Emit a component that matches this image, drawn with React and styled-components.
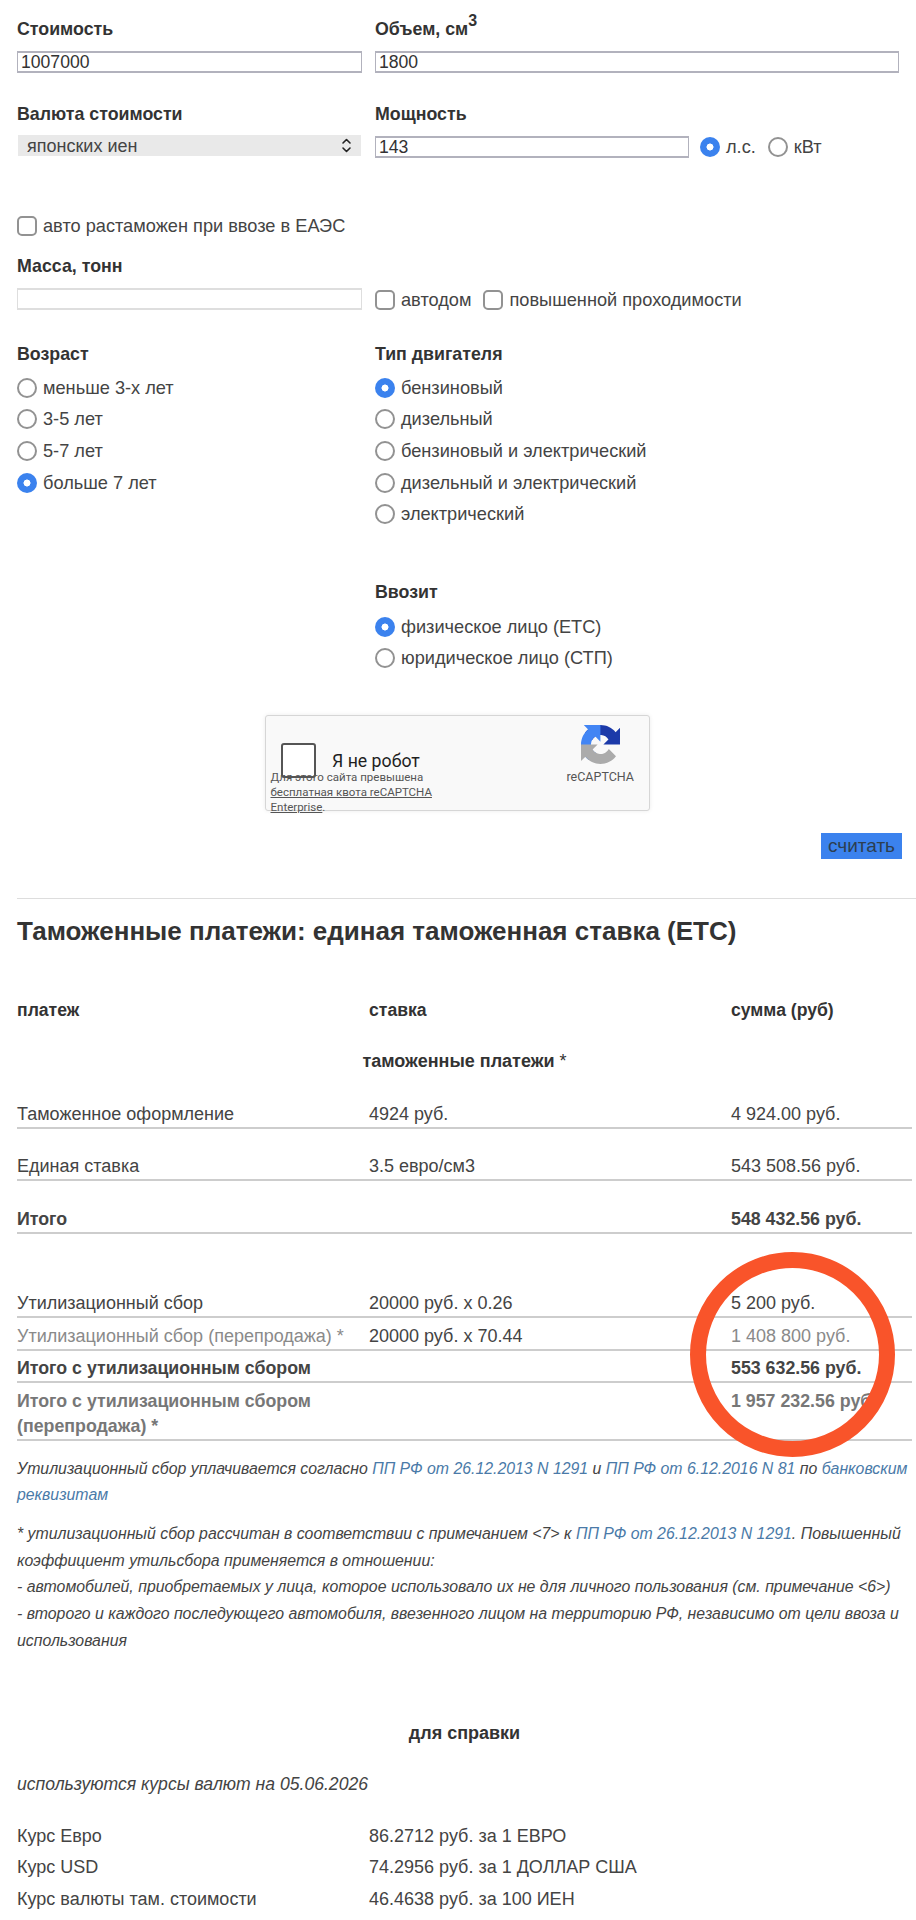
import React from 'react';
import styled, { createGlobalStyle } from 'styled-components';

const Global = createGlobalStyle`
  html, body { margin: 0; padding: 0; background: #fff; }
  body { font-family: "Liberation Sans", Arial, sans-serif; color: #444; font-size: 18px; }
`;

const Page = styled.div`
  position: relative;
  width: 916px;
  height: 1920px;
  overflow: hidden;
  box-sizing: border-box;
  padding: 19px 0 0 17px;
  line-height: 20px;
`;

const FormRow = styled.div`
  display: grid;
  grid-template-columns: 345px 524px;
  column-gap: 13px;
  margin-top: ${(p) => p.$top || 0}px;
`;

const Label = styled.div`
  font-size: 17.8px;
  font-weight: 700;
  color: #333;
  height: 20px;
  margin-bottom: ${(p) => (p.$gap === undefined ? 12 : p.$gap)}px;
`;

const Sup = styled.sup`
  font-size: 16px;
  line-height: 0;
  vertical-align: 9px;
`;

const TextInput = styled.input`
  display: block;
  box-sizing: border-box;
  width: ${(p) => p.$w || '100%'};
  height: 22px;
  padding: 0 3px;
  border-style: solid;
  border-color: ${(p) => (p.$light ? '#dedede' : '#b2b2bd')};
  border-width: 2px 1px;
  border-radius: 0;
  font: 17.6px "Liberation Sans", Arial, sans-serif;
  color: #333;
  background: #fff;
  outline: none;
`;

const SelectWrap = styled.div`
  position: relative;
  width: 343px;
  height: 21px;
  margin-left: 1px;
`;

const Select = styled.select`
  display: block;
  width: 100%;
  height: 100%;
  appearance: none;
  border: 0;
  border-radius: 0;
  background: #e9e9e9;
  padding: 0 0 0 9px;
  font: 18px "Liberation Sans", Arial, sans-serif;
  color: #444;
  outline: none;
`;

const SelectIcon = styled.svg`
  position: absolute;
  right: 9px;
  top: 3px;
  width: 11px;
  height: 15px;
  pointer-events: none;
`;

const InlineRow = styled.div`
  display: flex;
  align-items: center;
  gap: ${(p) => p.$gap || 0}px;
`;

const OptionLabel = styled.label`
  display: flex;
  align-items: center;
  gap: 6px;
  height: ${(p) => p.$h || 20}px;
  white-space: nowrap;
  font-size: 18.2px;
  color: #444;
`;

const Radio = styled.input.attrs({ type: 'radio' })`
  appearance: none;
  box-sizing: border-box;
  flex: none;
  width: 20px;
  height: 20px;
  margin: 0;
  border: 2px solid #929292;
  border-radius: 50%;
  background: #fff;
  &:checked {
    border: 0;
    background: radial-gradient(circle, #fff 0 3.2px, #3b82ee 3.8px);
  }
`;

const Check = styled.input.attrs({ type: 'checkbox' })`
  appearance: none;
  box-sizing: border-box;
  flex: none;
  width: 20px;
  height: 20px;
  margin: 0;
  border: 2px solid #929292;
  border-radius: 5px;
  background: #fff;
`;

const Options = styled.div`
  display: flex;
  flex-direction: column;
  margin-top: ${(p) => p.$top || 0}px;
`;

const Captcha = styled.div`
  position: relative;
  box-sizing: border-box;
  width: 385px;
  height: 96px;
  margin: 41px 0 0 248px;
  padding: 27px 0 0 15px;
  background: #f9f9f9;
  border: 1px solid #d6d6d6;
  border-radius: 3px;
  box-shadow: 0 0 4px rgba(0, 0, 0, 0.08);
  font-family: Roboto, "Liberation Sans", sans-serif;
`;

const CaptchaMain = styled.div`
  display: flex;
  align-items: center;
  gap: 16px;
  color: #1f1f1f;
  font-size: 17.7px;
`;

const CaptchaBox = styled.div`
  width: 35px;
  height: 35px;
  box-sizing: border-box;
  border: 2px solid #555;
  border-radius: 3px;
  background: #fff;
`;

const CaptchaNote = styled.div`
  position: absolute;
  left: 4.5px;
  top: 53.5px;
  width: 170px;
  font-size: 11.5px;
  line-height: 15px;
  color: #555;
  a { color: #555; text-decoration: underline; }
`;

const CaptchaBrand = styled.div`
  position: absolute;
  right: 15px;
  top: 9px;
  display: flex;
  flex-direction: column;
  align-items: center;
  gap: 6px;
  font-size: 12.5px;
  line-height: 14px;
  color: #555;
`;

const Submit = styled.button`
  display: block;
  box-sizing: border-box;
  width: 81px;
  height: 26px;
  margin: 22px 0 0 804px;
  padding: 0;
  border: 0;
  background: #3b82ee;
  font: 19px "Liberation Sans", Arial, sans-serif;
  color: #2c3e50;
`;

const Rule = styled.hr`
  margin: 39px 0 0 0;
  border: 0;
  border-top: 1px solid #ddd;
`;

const Title = styled.h2`
  margin: 19px 0 0;
  font-size: 26px;
  line-height: 26px;
  font-weight: 700;
  color: #333;
`;

const Table = styled.table`
  table-layout: fixed;
  width: 895px;
  margin-top: 54px;
  border-collapse: collapse;
  color: #444;
  line-height: 25px;
`;

const Col = styled.col`
  width: ${(p) => p.$w}px;
`;

const Cell = styled.td`
  padding: ${(p) => (p.$compact ? 5.5 : 25.5)}px 0 0;
  vertical-align: top;
  color: ${(p) => p.$color || 'inherit'};
  font-weight: ${(p) => (p.$bold ? 700 : 400)};
  font-size: ${(p) => (p.$bold ? 17.8 : 18)}px;
`;

const Row = styled.tr`
  border-bottom: ${(p) => (p.$plain ? '0' : '2px solid #cdcdcd')};
`;

const HeadCell = styled.th`
  padding: 0;
  text-align: left;
  font-size: 17.6px;
  font-weight: 700;
  color: #333;
`;

const SectionCell = styled.td`
  padding: 26px 0 2px;
  text-align: center;
  font-size: 18px;
  font-weight: 700;
  color: #333;
`;

const Asterisk = styled.span`
  font-weight: 400;
`;

const SpacerCell = styled.td`
  height: 52px;
  padding: 0;
`;

const Note = styled.p`
  margin: ${(p) => p.$top || 0}px 0 0;
  font-size: 15.85px;
  font-style: italic;
  line-height: 26.7px;
  color: #444;
  a { color: #4a7aa8; text-decoration: none; }
`;

const Center = styled.div`
  margin-top: ${(p) => p.$top}px;
  width: 895px;
  text-align: center;
  font-size: 18px;
  font-weight: 700;
  color: #333;
`;

const RatesNote = styled.p`
  margin: 30px 0 0;
  font-size: 17.6px;
  font-style: italic;
  color: #444;
  line-height: 22px;
`;

const Rates = styled.div`
  display: grid;
  grid-template-columns: 352px 1fr;
  grid-auto-rows: 31.5px;
  margin-top: 26px;
  line-height: 31.5px;
`;

const Ring = styled.div`
  position: absolute;
  left: 690px;
  top: 1252px;
  width: 205px;
  height: 205px;
  box-sizing: border-box;
  border: 16px solid #f9542a;
  border-radius: 50%;
  pointer-events: none;
`;

function Opt({ name, children, checked, h }) {
  return (
    <OptionLabel $h={h}>
      <Radio name={name} defaultChecked={checked} />
      {children}
    </OptionLabel>
  );
}

function Cb({ children }) {
  return (
    <OptionLabel>
      <Check />
      {children}
    </OptionLabel>
  );
}

export default function App() {
  return (
    <Page>
      <Global />
      <FormRow>
        <div>
          <Label>Стоимость</Label>
          <TextInput defaultValue="1007000" />
        </div>
        <div>
          <Label>Объем, см<Sup>3</Sup></Label>
          <TextInput defaultValue="1800" />
        </div>
      </FormRow>
      <FormRow $top={31}>
        <div>
          <Label $gap={11}>Валюта стоимости</Label>
          <SelectWrap>
            <Select defaultValue="jpy">
              <option value="jpy">японских иен</option>
            </Select>
            <SelectIcon viewBox="0 0 11 15" fill="none" stroke="#222" strokeWidth="1.6" strokeLinecap="round" strokeLinejoin="round">
              <path d="M2 5l3.5-3.5L9 5" />
              <path d="M2 10l3.5 3.5L9 10" />
            </SelectIcon>
          </SelectWrap>
        </div>
        <div>
          <Label>Мощность</Label>
          <InlineRow $gap={11}>
            <TextInput $w="314px" defaultValue="143" />
            <InlineRow $gap={12}>
              <Opt name="unit" checked>л.с.</Opt>
              <Opt name="unit">кВт</Opt>
            </InlineRow>
          </InlineRow>
        </div>
      </FormRow>
      <Options $top={58}>
        <Cb>авто растаможен при ввозе в ЕАЭС</Cb>
      </Options>
      <FormRow $top={20}>
        <div>
          <Label>Масса, тонн</Label>
          <TextInput $light />
        </div>
        <div>
          <Label $gap={14}>&nbsp;</Label>
          <InlineRow $gap={12}>
            <Cb>автодом</Cb>
            <Cb>повышенной проходимости</Cb>
          </InlineRow>
        </div>
      </FormRow>
      <FormRow $top={34}>
        <div>
          <Label $gap={8}>Возраст</Label>
          <Options>
            <Opt name="age" h={31.6}>меньше 3-х лет</Opt>
            <Opt name="age" h={31.6}>3-5 лет</Opt>
            <Opt name="age" h={31.6}>5-7 лет</Opt>
            <Opt name="age" h={31.6} checked>больше 7 лет</Opt>
          </Options>
        </div>
        <div>
          <Label $gap={8}>Тип двигателя</Label>
          <Options>
            <Opt name="fuel" h={31.6} checked>бензиновый</Opt>
            <Opt name="fuel" h={31.6}>дизельный</Opt>
            <Opt name="fuel" h={31.6}>бензиновый и электрический</Opt>
            <Opt name="fuel" h={31.6}>дизельный и электрический</Opt>
            <Opt name="fuel" h={31.6}>электрический</Opt>
          </Options>
        </div>
      </FormRow>
      <FormRow $top={52}>
        <div />
        <div>
          <Label $gap={9}>Ввозит</Label>
          <Options>
            <Opt name="who" h={31.6} checked>физическое лицо (ЕТС)</Opt>
            <Opt name="who" h={31.6}>юридическое лицо (СТП)</Opt>
          </Options>
        </div>
      </FormRow>
      <Captcha>
        <CaptchaMain>
          <CaptchaBox />
          Я не робот
        </CaptchaMain>
        <CaptchaNote>
          Для этого сайта превышена <a href="#q">бесплатная квота reCAPTCHA Enterprise</a>.
        </CaptchaNote>
        <CaptchaBrand>
          <svg width="39" height="39" viewBox="0 0 64 64">
            <path d="M64 31.955l-.033-1.37V4.687l-7.16 7.16C50.948 4.674 42.033.093 32.05.093c-10.4 0-19.622 4.96-25.458 12.64l11.736 11.86a15.55 15.55 0 0 1 4.754-5.334c2.05-1.6 4.952-2.906 8.968-2.906.485 0 .86.057 1.135.163 4.976.393 9.288 3.14 11.828 7.124l-8.307 8.307 32.294-.001" fill="#1c3aa9" />
            <path d="M31.862 0l-1.37.033H4.594l7.16 7.16C4.58 13.052 0 21.967 0 31.95c0 10.4 4.96 19.622 12.64 25.458l11.86-11.736a15.55 15.55 0 0 1-5.334-4.754c-1.6-2.05-2.906-4.952-2.906-8.968 0-.485.057-.86.163-1.135.393-4.976 3.14-9.288 7.124-11.828l8.307 8.307L31.862 0" fill="#4285f4" />
            <path d="M.001 31.955l.033 1.37v25.9l7.16-7.16c5.86 7.173 14.775 11.754 24.76 11.754 10.4 0 19.622-4.96 25.458-12.64l-11.736-11.86a15.55 15.55 0 0 1-4.754 5.334c-2.05 1.6-4.952 2.906-8.968 2.906-.485 0-.86-.057-1.135-.163-4.976-.393-9.288-3.14-11.828-7.124l8.307-8.307-32.294.001" fill="#ababab" />
          </svg>
          reCAPTCHA
        </CaptchaBrand>
      </Captcha>
      <Submit>считать</Submit>
      <Rule />
      <Title>Таможенные платежи: единая таможенная ставка (ЕТС)</Title>
      <Table>
        <colgroup>
          <Col $w={352} />
          <Col $w={362} />
          <Col $w={181} />
        </colgroup>
        <tbody>
          <Row $plain>
            <HeadCell>платеж</HeadCell>
            <HeadCell>ставка</HeadCell>
            <HeadCell>сумма (руб)</HeadCell>
          </Row>
          <Row $plain>
            <SectionCell colSpan={3}>таможенные платежи <Asterisk>*</Asterisk></SectionCell>
          </Row>
          <Row>
            <Cell>Таможенное оформление</Cell>
            <Cell>4924 руб.</Cell>
            <Cell>4 924.00 руб.</Cell>
          </Row>
          <Row>
            <Cell>Единая ставка</Cell>
            <Cell>3.5 евро/см3</Cell>
            <Cell>543 508.56 руб.</Cell>
          </Row>
          <Row>
            <Cell $bold>Итого</Cell>
            <Cell />
            <Cell $bold>548 432.56 руб.</Cell>
          </Row>
          <Row $plain>
            <SpacerCell colSpan={3} />
          </Row>
          <Row>
            <Cell $compact>Утилизационный сбор</Cell>
            <Cell $compact>20000 руб. x 0.26</Cell>
            <Cell $compact>5 200 руб.</Cell>
          </Row>
          <Row>
            <Cell $compact $color="#8a8a8a">Утилизационный сбор (перепродажа) *</Cell>
            <Cell $compact>20000 руб. x 70.44</Cell>
            <Cell $compact $color="#8a8a8a">1 408 800 руб.</Cell>
          </Row>
          <Row>
            <Cell $compact $bold>Итого с утилизационным сбором</Cell>
            <Cell $compact />
            <Cell $compact $bold>553 632.56 руб.</Cell>
          </Row>
          <Row>
            <Cell $compact $bold $color="#777">Итого с утилизационным сбором (перепродажа) *</Cell>
            <Cell $compact />
            <Cell $compact $bold $color="#777">1 957 232.56 руб.</Cell>
          </Row>
        </tbody>
      </Table>
      <Note $top={15}>
        Утилизационный сбор уплачивается согласно <a href="#a">ПП РФ от 26.12.2013 N 1291</a> и <a href="#b">ПП РФ от 6.12.2016 N 81</a> по <a href="#c">банковским реквизитам</a>
      </Note>
      <Note $top={12}>
        * утилизационный сбор рассчитан в соответствии с примечанием &lt;7&gt; к <a href="#a">ПП РФ от 26.12.2013 N 1291</a>. Повышенный коэффициент утильсбора применяется в отношении:
        <br />- автомобилей, приобретаемых у лица, которое использовало их не для личного пользования (см. примечание &lt;6&gt;)
        <br />- второго и каждого последующего автомобиля, ввезенного лицом на территорию РФ, независимо от цели ввоза и использования
      </Note>
      <Center $top={68}>для справки</Center>
      <RatesNote>используются курсы валют на 05.06.2026</RatesNote>
      <Rates>
        <span>Курс Евро</span><span>86.2712 руб. за 1 ЕВРО</span>
        <span>Курс USD</span><span>74.2956 руб. за 1 ДОЛЛАР США</span>
        <span>Курс валюты там. стоимости</span><span>46.4638 руб. за 100 ИЕН</span>
      </Rates>
      <Ring />
    </Page>
  );
}
